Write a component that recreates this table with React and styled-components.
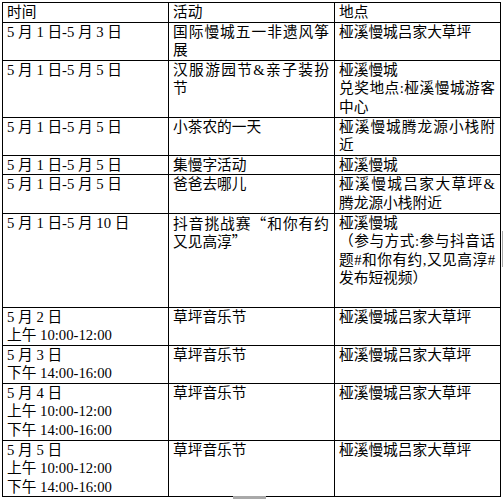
import React from "react";
import styled, { createGlobalStyle } from "styled-components";

const GlobalStyle = createGlobalStyle`
	html, body {
		margin: 0;
		padding: 0;
		background: #ffffff;
	}
`;

const Page = styled.div`
	position: relative;
	width: 503px;
	height: 499px;
	padding: 2px 0 0 2px;
	box-sizing: border-box;
	overflow: hidden;
	font-family: "Liberation Serif", "Noto Sans CJK SC", serif;
	font-size: 14.7px;
	color: #000000;
`;

const Schedule = styled.table`
	width: 499px;
	border-collapse: collapse;
	table-layout: fixed;
`;

const Cell = styled.td`
	border: 1px solid #000000;
	padding: 0 5px 0 4px;
	vertical-align: top;
	line-height: 18.6px;
	text-align: justify;
	word-break: normal;
`;

const HeadCell = styled(Cell).attrs({ as: "th" })`
	font-weight: normal;
	text-align: left;
`;

const Para = styled.p`
	margin: 0;
	min-height: 18.6px;
	font-family: ${(p) =>
		p.$cjk ? '"Noto Sans CJK SC", sans-serif' : "inherit"};
`;

const ScrollMark = styled.div`
	position: absolute;
	background: #a9a9a9;
	${(p) =>
		p.$vertical
			? "left: 502px; top: 231px; width: 1px; height: 36px;"
			: "left: 233px; top: 496px; width: 33px; height: 3px;"}
`;

const rows = [
	{
		time: ["5 月 1 日-5 月 3 日"],
		event: ["国际慢城五一非遗风筝展"],
		place: ["桠溪慢城吕家大草坪"],
	},
	{
		time: ["5 月 1 日-5 月 5 日"],
		event: ["汉服游园节&亲子装扮节"],
		place: ["桠溪慢城", "兑奖地点:桠溪慢城游客中心"],
	},
	{
		time: ["5 月 1 日-5 月 5 日"],
		event: ["小茶农的一天"],
		place: ["桠溪慢城腾龙源小栈附近"],
	},
	{
		time: ["5 月 1 日-5 月 5 日"],
		event: ["集慢字活动"],
		place: ["桠溪慢城"],
	},
	{
		time: ["5 月 1 日-5 月 5 日"],
		event: ["爸爸去哪儿"],
		place: ["桠溪慢城吕家大草坪&腾龙源小栈附近"],
	},
	{
		time: ["5 月 1 日-5 月 10 日"],
		event: ["抖音挑战赛“和你有约又见高淳”"],
		eventCjk: true,
		place: ["桠溪慢城", "（参与方式:参与抖音话题#和你有约,又见高淳#发布短视频）", ""],
	},
	{
		time: ["5 月 2 日", "上午 10:00-12:00"],
		event: ["草坪音乐节"],
		place: ["桠溪慢城吕家大草坪"],
	},
	{
		time: ["5 月 3 日", "下午 14:00-16:00"],
		event: ["草坪音乐节"],
		place: ["桠溪慢城吕家大草坪"],
	},
	{
		time: ["5 月 4 日", "上午 10:00-12:00", "下午 14:00-16:00"],
		event: ["草坪音乐节"],
		place: ["桠溪慢城吕家大草坪"],
	},
	{
		time: ["5 月 5 日", "上午 10:00-12:00", "下午 14:00-16:00"],
		event: ["草坪音乐节"],
		place: ["桠溪慢城吕家大草坪"],
	},
];

const Paras = ({ lines, cjk }) =>
	lines.map((line, i) => (
		<Para key={i} $cjk={cjk}>
			{line === "" ? "\u00a0" : line}
		</Para>
	));

export default function App() {
	return (
		<Page>
			<GlobalStyle />
			<Schedule>
				<thead>
					<tr>
						<HeadCell>时间</HeadCell>
						<HeadCell>活动</HeadCell>
						<HeadCell>地点</HeadCell>
					</tr>
				</thead>
				<tbody>
					{rows.map((row, i) => (
						<tr key={i}>
							<Cell>
								<Paras lines={row.time} />
							</Cell>
							<Cell>
								<Paras lines={row.event} cjk={row.eventCjk} />
							</Cell>
							<Cell>
								<Paras lines={row.place} />
							</Cell>
						</tr>
					))}
				</tbody>
			</Schedule>
			<ScrollMark $vertical />
			<ScrollMark />
		</Page>
	);
}
